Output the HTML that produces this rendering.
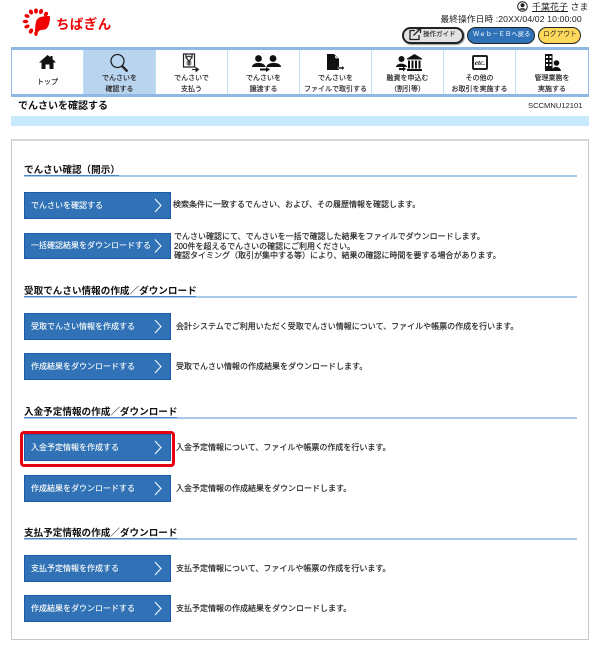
<!DOCTYPE html>
<html lang="ja"><head><meta charset="utf-8"><title>でんさいを確認する</title>
<style>
html,body{margin:0;padding:0;background:#fff}
#p{position:relative;width:600px;height:651px;overflow:hidden;font-family:"Liberation Sans","Noto Sans CJK JP",sans-serif;color:#222}
#p div,#p svg{position:absolute}
.t{white-space:nowrap;line-height:1}
.nav{top:50px;height:44px;width:71px;background:#fff;border-right:1px solid #c0e0f5;box-sizing:content-box}
.nl{left:0;width:71px;text-align:center;font-size:7px;line-height:11px;top:22.5px;white-space:nowrap;color:#222;-webkit-text-stroke:.15px #222}
.h{left:24px;font-size:9.6px;font-weight:700;white-space:nowrap;line-height:1;color:#111}
.hl{left:24px;width:553px;height:2px;background:#a9c9ec}
.hu{left:24px;height:1px;background:#4a86c8}
.b{left:24px;width:147px;height:27px;box-sizing:border-box;background:#3072b5;border:1px solid #1a5ca8;color:#fff;font-size:8px;line-height:25px;white-space:nowrap;padding-left:6px;-webkit-text-stroke:.1px #fff}
.d{font-size:8px;line-height:1;white-space:nowrap;color:#222;-webkit-text-stroke:.15px #222}
</style></head><body><div id="p">

<!-- logo -->
<svg style="left:22px;top:8px" width="30" height="28" viewBox="0 0 30 28">
<g fill="#f00000">
<ellipse cx="14" cy="3" rx="2" ry="2.6"/><ellipse cx="9" cy="4" rx="2" ry="2.6" transform="rotate(-25 9 4)"/><ellipse cx="19" cy="3.5" rx="2" ry="2.6" transform="rotate(20 19 3.5)"/><ellipse cx="24" cy="6" rx="2" ry="2.4" transform="rotate(40 24 6)"/><ellipse cx="5" cy="8" rx="2.6" ry="1.8" transform="rotate(20 5 8)"/><ellipse cx="3.5" cy="13.5" rx="2.8" ry="1.8"/><ellipse cx="5" cy="18.5" rx="2.8" ry="1.8" transform="rotate(-25 5 18.5)"/><ellipse cx="9" cy="23" rx="2" ry="2.8" transform="rotate(25 9 23)"/><ellipse cx="14" cy="25.5" rx="1.8" ry="2.5" transform="rotate(5 14 25.5)"/>
<path d="M13 27 C13 22 13 18 14 14 C15 9 20 8 27.5 8 C28.5 8 28 16 25.5 19.5 C23 23 19 21 17 23 C15.5 24.5 14.5 26 13 27 Z"/>
</g></svg>
<div class="t" style="left:56px;top:18px;font-size:13.5px;font-weight:700;color:#f00000;letter-spacing:.4px">ちばぎん</div>

<!-- top right -->
<svg style="left:517px;top:1px" width="11" height="11" viewBox="0 0 11 11"><circle cx="5.5" cy="5.5" r="4.8" fill="#fff" stroke="#222"/><circle cx="5.5" cy="4.2" r="2" fill="#222"/><path d="M2 8.8 C3 6.5 8 6.5 9 8.8 Z" fill="#222"/></svg>
<div class="t" style="left:532px;top:3px;font-size:9px;color:#222"><span style="text-decoration:underline">千葉花子</span> さま</div>
<div class="t" style="left:440.5px;top:15px;font-size:8.7px;color:#222;letter-spacing:.1px">最終操作日時 :20XX/04/02 10:00:00</div>

<div style="left:402px;top:26.5px;width:62px;height:17px;box-sizing:border-box;border:2px solid #222;border-radius:9px;background:#e2e2e2;box-shadow:1px 1px 1px #999"></div>
<svg style="left:408px;top:28px" width="14" height="13" viewBox="0 0 14 13"><path d="M7 2.5H2v9h9V7M5.5 7.5L12 1M8.5 1H12.5V5" fill="none" stroke="#222" stroke-width="1.3"/></svg>
<div class="t" style="left:423px;top:32px;font-size:6.5px;color:#222;-webkit-text-stroke:.1px #222">操作ガイド</div>
<div style="left:467px;top:26.5px;width:68px;height:17px;box-sizing:border-box;border:1.5px solid #222;border-radius:9px;background:#2f72b8"></div>
<div class="t" style="left:473px;top:32px;font-size:6.3px;color:#fff;letter-spacing:.1px">Ｗｅｂ－ＥＢへ戻る</div>
<div style="left:538px;top:26.5px;width:43px;height:17px;box-sizing:border-box;border:1.5px solid #222;border-radius:9px;background:#ffd95c"></div>
<div class="t" style="left:543px;top:32px;font-size:6.8px;color:#222">ログアウト</div>

<!-- nav -->
<div style="left:11px;top:47px;width:578px;height:50px;background:#8fb8e3"></div>
<div class="nav" style="left:12px"><div class="nl" style="top:26.5px">トップ</div>
<svg style="left:27px;top:4.5px" width="17" height="14" viewBox="0 0 17 14"><path d="M8.5 0L0 7.5H2.5V14H6.5V9.5H10.5V14H14.5V7.5H17L13.5 4V1H11.5V2.3Z" fill="#111"/></svg></div>
<div class="nav" style="left:84px;background:#b9d4ee;width:71px"><div class="nl">でんさいを<br>確認する</div>
<svg style="left:25px;top:3px" width="20" height="20" viewBox="0 0 20 20"><circle cx="8.5" cy="8" r="6.5" fill="none" stroke="#222" stroke-width="1.3"/><path d="M13 13L18.5 18.5" stroke="#222" stroke-width="2.3"/></svg></div>
<div class="nav" style="left:156px"><div class="nl">でんさいで<br>支払う</div>
<svg style="left:26px;top:3px" width="18" height="20" viewBox="0 0 18 20"><path d="M1.5 1H12.5V14H1.5Z M4 1V4.5L7 3M10 1V4.5L7 3" fill="none" stroke="#222" stroke-width="1.2"/><path d="M4.5 5L7 8.5L9.5 5M7 8.5V13M4.5 9H9.5M4.5 11H9.5" fill="none" stroke="#222" stroke-width="1.1"/><path d="M10 16.5H15.5M14 14.5L16.5 16.5L14 18.5Z" fill="#222" stroke="#222"/></svg></div>
<div class="nav" style="left:228px"><div class="nl">でんさいを<br>譲渡する</div>
<svg style="left:23px;top:4.5px" width="31" height="17" viewBox="0 0 31 17"><g fill="#111"><circle cx="7.5" cy="3.5" r="3.4"/><circle cx="22" cy="3.5" r="3.4"/><path d="M1 12C1 6.5 14 6.5 14.5 12Z"/><path d="M30 12C30 6.5 15.5 6.5 15.5 12Z"/><path d="M9 13.5H15V12L19 14.5L15 17V15.5H9Z"/></g></svg></div>
<div class="nav" style="left:300px"><div class="nl">でんさいを<br>ファイルで取引する</div>
<svg style="left:27px;top:4px" width="18" height="19" viewBox="0 0 18 19"><path d="M0 0H7L12 5V16H0Z" fill="#111"/><path d="M8 1V4.5H11.5Z" fill="#fff" stroke="#111" stroke-width=".4"/><path d="M11 13H15V11.5L17.5 14L15 16.5V15H11Z" fill="#222" stroke="#fff" stroke-width=".4"/></svg></div>
<div class="nav" style="left:372px"><div class="nl">融資を申込む<br>（割引等）</div>
<svg style="left:24px;top:4px" width="27" height="19" viewBox="0 0 27 19"><g fill="#111"><circle cx="5.5" cy="5" r="3"/><path d="M0 13C0.5 8.5 10 8.5 11 13Z"/><path d="M18.5 0L26 4.5V5.5H11V4.5Z"/><rect x="12" y="6.5" width="2" height="8"/><rect x="15.5" y="6.5" width="2" height="8"/><rect x="19" y="6.5" width="2" height="8"/><rect x="22.5" y="6.5" width="2" height="8"/><rect x="11" y="15" width="15" height="2"/><path d="M3 14H7V12.5L10 15L7 17.5V16H3Z"/></g></svg></div>
<div class="nav" style="left:444px"><div class="nl">その他の<br>お取引を実施する</div>
<div style="left:28px;top:4.5px;width:16px;height:15px;box-sizing:border-box;border:2px solid #222;border-radius:2px;font-family:'Liberation Serif',serif;font-style:italic;font-weight:700;font-size:7.5px;line-height:11px;text-align:center;color:#222">etc.</div></div>
<div class="nav" style="left:516px;width:72px;border-right:0"><div class="nl" style="width:72px">管理業務を<br>実施する</div>
<svg style="left:29px;top:3.5px" width="16" height="18" viewBox="0 0 16 18"><path d="M0 0H7.5V17H0Z" fill="#111"/><g fill="#fff"><rect x="1" y="2" width="2" height="2"/><rect x="4.5" y="2" width="2" height="2"/><rect x="1" y="6" width="2" height="2"/><rect x="4.5" y="6" width="2" height="2"/><rect x="1" y="10" width="2" height="2"/><rect x="4.5" y="10" width="2" height="2"/></g><circle cx="11.5" cy="9" r="2.8" fill="#111"/><path d="M6.5 17C7.5 11.5 15 11.5 16 17Z" fill="#111"/></svg></div>

<!-- title -->
<div class="t" style="left:18px;top:101.5px;font-size:10px;font-weight:700;color:#111">でんさいを確認する</div>
<div class="t" style="left:528px;top:101.5px;font-size:7.6px;color:#222">SCCMNU12101</div>
<div style="left:11px;top:116px;width:578px;height:10px;background:#c9e9fc"></div>

<!-- box -->
<div style="left:11px;top:138.5px;width:578px;height:501px;box-sizing:border-box;border:1px solid #c8c8c8;border-top:2px solid #d8d8d8"></div>

<!-- sec 1 -->
<div class="h" style="top:165.5px">でんさい確認（開示）</div>
<div class="hl" style="top:175px"></div><div class="hu" style="top:175px;width:95px"></div>
<div class="b" style="top:192px">でんさいを確認する</div>
<div class="d" style="left:173px;top:201px">検索条件に一致するでんさい、および、その履歴情報を確認します。</div>
<div class="b" style="top:233px;height:26px;line-height:24px">一括確認結果をダウンロードする</div>
<div class="d" style="left:174px;top:232px;line-height:9.5px">でんさい確認にて、でんさいを一括で確認した結果をファイルでダウンロードします。<br>200件を超えるでんさいの確認にご利用ください。<br>確認タイミング（取引が集中する等）により、結果の確認に時間を要する場合があります。</div>

<!-- sec 2 -->
<div class="h" style="top:286.5px">受取でんさい情報の作成／ダウンロード</div>
<div class="hl" style="top:296px"></div><div class="hu" style="top:296px;width:172px"></div>
<div class="b" style="top:313px">受取でんさい情報を作成する</div>
<div class="d" style="left:176px;top:323px">会計システムでご利用いただく受取でんさい情報について、ファイルや帳票の作成を行います。</div>
<div class="b" style="top:353px">作成結果をダウンロードする</div>
<div class="d" style="left:176px;top:363px">受取でんさい情報の作成結果をダウンロードします。</div>

<!-- sec 3 -->
<div class="h" style="top:407.5px">入金予定情報の作成／ダウンロード</div>
<div class="hl" style="top:417px"></div><div class="hu" style="top:417px;width:153px"></div>
<div class="b" style="top:434px;height:27px">入金予定情報を作成する</div>
<div style="left:19.5px;top:430.5px;width:155.5px;height:36px;box-sizing:border-box;border:3px solid #e60012;border-radius:4px"></div>
<div class="d" style="left:176px;top:444px">入金予定情報について、ファイルや帳票の作成を行います。</div>
<div class="b" style="top:475px">作成結果をダウンロードする</div>
<div class="d" style="left:176px;top:484.5px">入金予定情報の作成結果をダウンロードします。</div>

<!-- sec 4 -->
<div class="h" style="top:528.5px">支払予定情報の作成／ダウンロード</div>
<div class="hl" style="top:538px"></div><div class="hu" style="top:538px;width:153px"></div>
<div class="b" style="top:555px">支払予定情報を作成する</div>
<div class="d" style="left:176px;top:565px">支払予定情報について、ファイルや帳票の作成を行います。</div>
<div class="b" style="top:595px">作成結果をダウンロードする</div>
<div class="d" style="left:176px;top:605px">支払予定情報の作成結果をダウンロードします。</div>

<!-- chevrons -->
<svg style="left:0;top:0" width="600" height="651" fill="none" stroke="#fff" stroke-width="1">
<path d="M155 199L161 205.5L155 212"/><path d="M155 239.5L161 246L155 252.5"/>
<path d="M155 320L161 326.5L155 333"/><path d="M155 360L161 366.5L155 373"/>
<path d="M155 441L161 447.5L155 454"/><path d="M155 482L161 488.5L155 495"/>
<path d="M155 562L161 568.5L155 575"/><path d="M155 602L161 608.5L155 615"/>
</svg>
</div></body></html>
